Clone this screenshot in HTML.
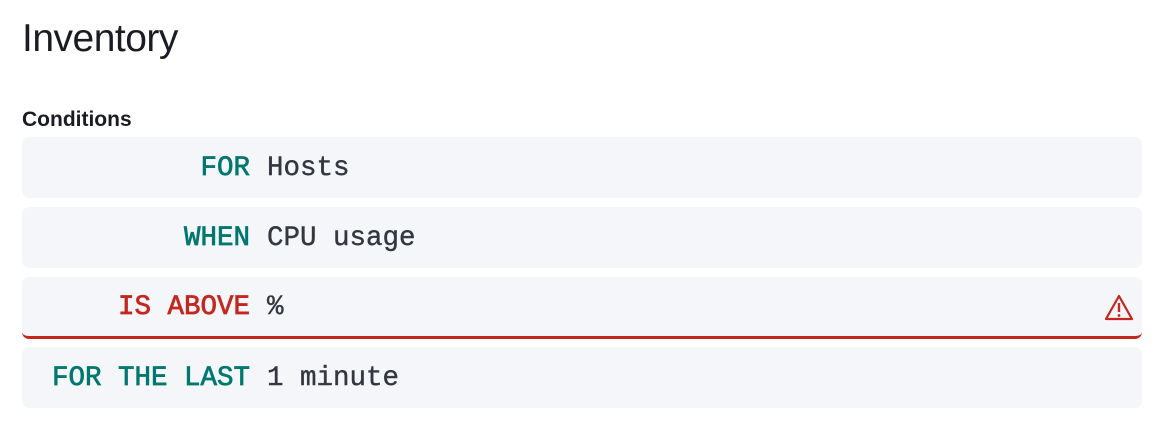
<!DOCTYPE html>
<html><head><style>
body{margin:0;background:#fff;width:1168px;height:430px;overflow:hidden;font-family:"Liberation Sans",sans-serif;color:#1a1c21}
h1{position:absolute;left:22px;top:17px;margin:0;font-size:39px;font-weight:400;letter-spacing:-0.5px}
.c{position:absolute;left:22px;top:108px;font-size:21px;font-weight:700}
.r{position:absolute;left:22px;width:1120px;height:61px;background:#f5f6fa;border-radius:7px;font-family:"Liberation Mono",monospace;font-size:27.5px;line-height:64px}
.l{position:absolute;right:892px;color:#00786f;-webkit-text-stroke:0.7px #00786f}
.v{position:absolute;left:245px;color:#343741;-webkit-text-stroke:0.4px #343741}
.e{border-bottom:3px solid #c3271f;height:59px;line-height:62px}
.e .l{color:#c3271f;-webkit-text-stroke:0.7px #c3271f}
</style></head><body>
<h1>Inventory</h1>
<div class="c">Conditions</div>
<div class="r" style="top:137px"><span class="l">FOR</span><span class="v">Hosts</span></div>
<div class="r" style="top:207px"><span class="l">WHEN</span><span class="v">CPU usage</span></div>
<div class="r e" style="top:277px"><span class="l">IS ABOVE</span><span class="v">%</span>
<svg style="position:absolute;left:1082px;top:17px" width="30" height="27" viewBox="0 0 30 27"><path d="M15 2 L28 25 H2 Z" fill="none" stroke="#c3271f" stroke-width="2.2" stroke-linejoin="round"/><path d="M15 9 V18" stroke="#c3271f" stroke-width="2.4"/><circle cx="15" cy="21.5" r="1.4" fill="#c3271f"/></svg></div>
<div class="r" style="top:347px"><span class="l">FOR THE LAST</span><span class="v">1 minute</span></div>
</body></html>
